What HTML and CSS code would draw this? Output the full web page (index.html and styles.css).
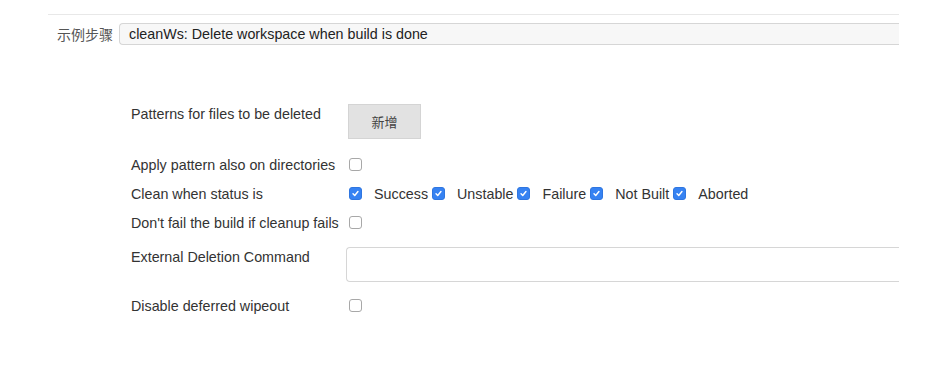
FILE: index.html
```html
<!DOCTYPE html>
<html lang="zh">
<head>
<meta charset="utf-8">
<link rel="stylesheet" href="styles.css">
</head>
<body>
<div class="wrap">
  <div class="step-row">
    <span class="step-label">示例步骤</span>
    <div class="select">cleanWs: Delete workspace when build is done</div>
  </div>
  <div class="form">
    <div class="row row-pattern">
      <div class="label lbl-top">Patterns for files to be deleted</div>
      <div class="field"><button class="btn">新增</button></div>
    </div>
    <div class="row">
      <div class="label">Apply pattern also on directories</div>
      <div class="field"><span class="cb"></span></div>
    </div>
    <div class="row">
      <div class="label">Clean when status is</div>
      <div class="field">
        <span class="cb on"><svg viewBox="0 0 13 13"><path d="M3.6 6.8 L5.6 8.8 L9.4 4.2" /></svg></span><span class="opt">Success</span>
        <span class="cb on"><svg viewBox="0 0 13 13"><path d="M3.6 6.8 L5.6 8.8 L9.4 4.2" /></svg></span><span class="opt">Unstable</span>
        <span class="cb on"><svg viewBox="0 0 13 13"><path d="M3.6 6.8 L5.6 8.8 L9.4 4.2" /></svg></span><span class="opt">Failure</span>
        <span class="cb on"><svg viewBox="0 0 13 13"><path d="M3.6 6.8 L5.6 8.8 L9.4 4.2" /></svg></span><span class="opt">Not Built</span>
        <span class="cb on"><svg viewBox="0 0 13 13"><path d="M3.6 6.8 L5.6 8.8 L9.4 4.2" /></svg></span><span class="opt">Aborted</span>
      </div>
    </div>
    <div class="row">
      <div class="label">Don't fail the build if cleanup fails</div>
      <div class="field"><span class="cb"></span></div>
    </div>
    <div class="row row-ext">
      <div class="label lbl-top2">External Deletion Command</div>
      <div class="field"><div class="textbox"></div></div>
    </div>
    <div class="row row-last">
      <div class="label">Disable deferred wipeout</div>
      <div class="field"><span class="cb"></span></div>
    </div>
  </div>
</div>
</body>
</html>
```

FILE: styles.css
```css
* { box-sizing: border-box; }
html, body { margin: 0; padding: 0; background: #fff; }
body {
  font-family: "Liberation Sans", Arial, "Noto Sans CJK SC", sans-serif;
  font-size: 14.3px;
  color: #333;
}
.wrap {
  margin: 14px 42px 0 48px;
  border-top: 1px solid #e8e8e8;
}
.step-row {
  display: flex;
  align-items: center;
  margin-top: 8px;
}
.step-label {
  width: 71px;
  padding-left: 9px;
  color: #555;
  font-size: 14px;
  font-family: "Noto Sans CJK SC", sans-serif;
  line-height: 22px;
}
.select {
  flex: 1;
  height: 22px;
  background: #f7f7f7;
  border: 1px solid #d6d6d6;
  border-right: none;
  border-radius: 4px 0 0 4px;
  padding-left: 9px;
  line-height: 20px;
  color: #222;
}
.form {
  margin-top: 59px;
  margin-left: 83px;
}
.row {
  display: grid;
  grid-template-columns: 217px 1fr;
  height: 29px;
  align-items: center;
}
.row-pattern { height: 35px; align-items: start; margin-bottom: 11px; }
.row-ext { height: 35px; align-items: start; margin-top: 10px; margin-bottom: 9px; }
.label { line-height: 16px; white-space: nowrap; }
.lbl-top { padding-top: 2px; }
.lbl-top2 { padding-top: 2px; }
.field { display: flex; align-items: center; }
.btn {
  width: 73px;
  height: 35px;
  background: #e2e2e2;
  border: 1px solid #d4d4d4;
  border-radius: 0;
  font-family: "Noto Sans CJK SC", sans-serif;
  font-size: 13px;
  color: #444;
  padding: 0;
}
.cb {
  display: inline-block;
  width: 13px;
  height: 13px;
  border: 1px solid #a8a8a8;
  border-radius: 3px;
  background: #fff;
  margin-left: 1px;
  margin-right: 12px;
  flex: none;
}
.cb.on {
  background: #3682f2;
  border-color: #2f76e0;
}
.cb svg { display: block; width: 11px; height: 11px; }
.cb svg path {
  fill: none;
  stroke: #fff;
  stroke-width: 1.7;
  stroke-linecap: round;
  stroke-linejoin: round;
}
.opt { margin-right: 3px; color: #333; }
.textbox {
  margin-left: -2px;
  flex: 1;
  height: 35px;
  border: 1px solid #d6d6d6;
  border-right: none;
  border-radius: 4px 0 0 4px;
  background: #fff;
}
```
